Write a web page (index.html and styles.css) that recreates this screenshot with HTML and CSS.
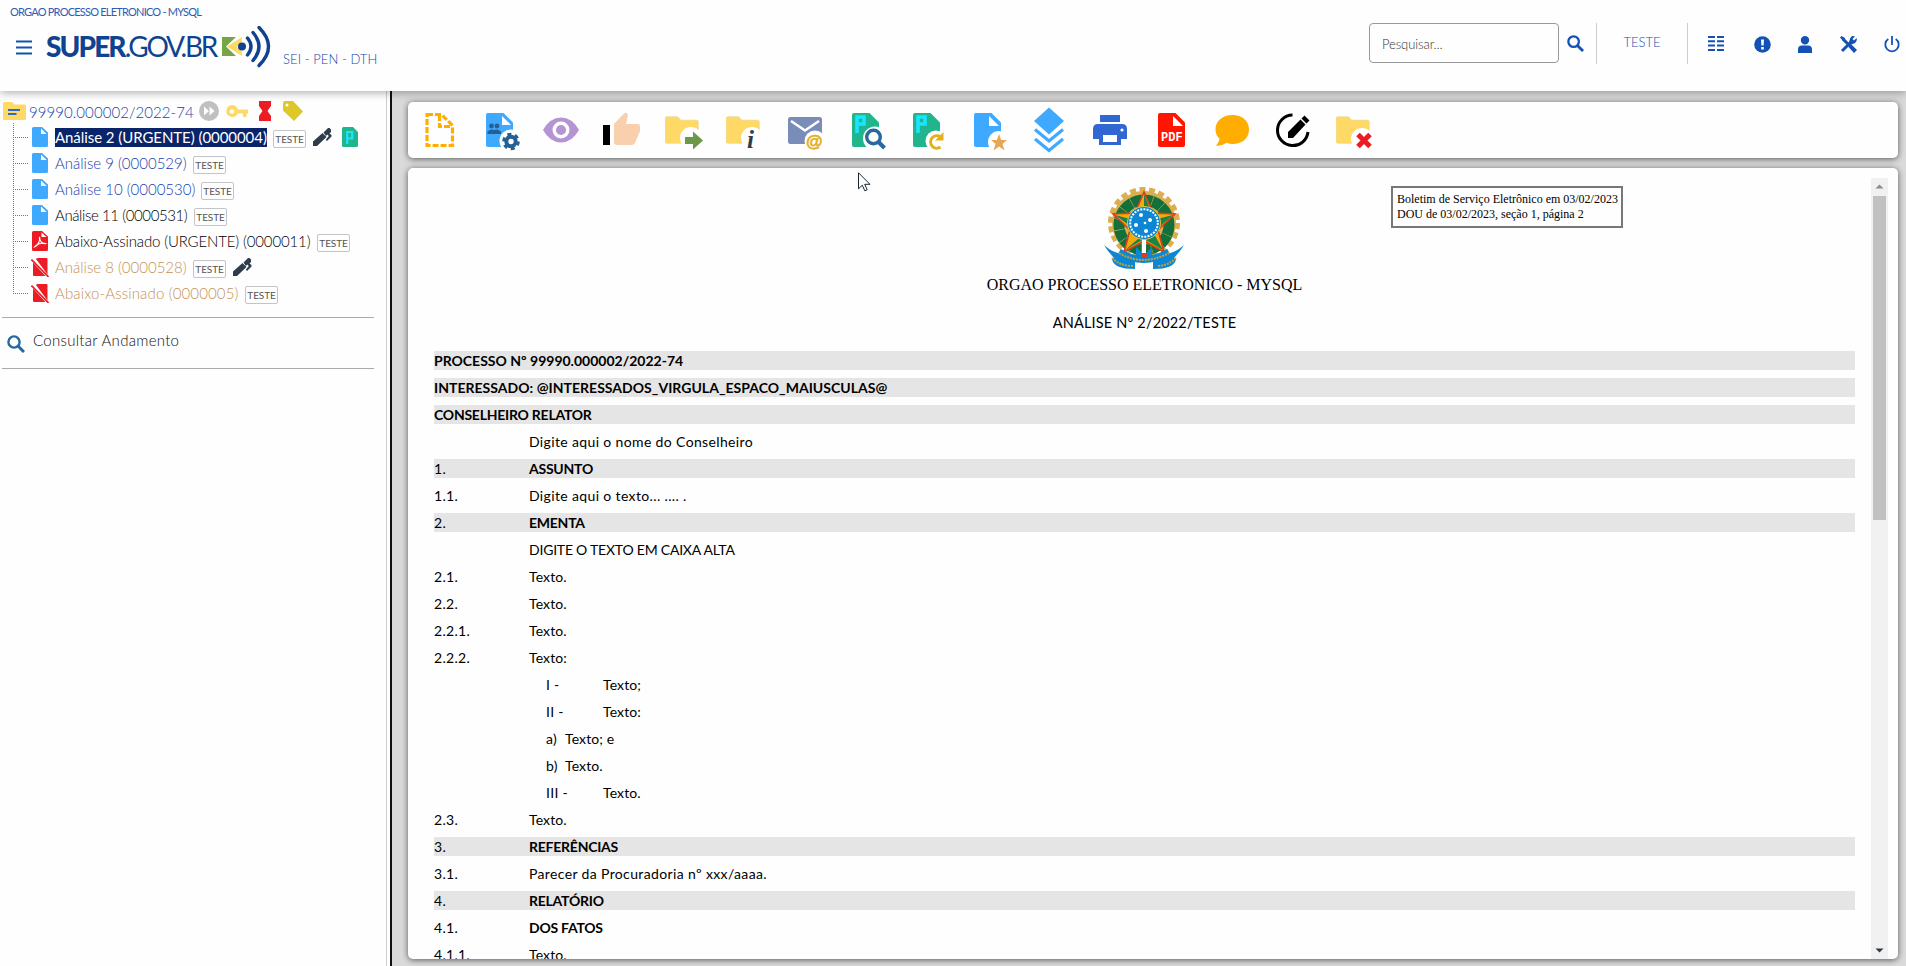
FILE: index.html
```html
<!DOCTYPE html>
<html lang="pt-BR">
<head>
<meta charset="utf-8">
<title>SUPER.GOV.BR - SEI</title>
<link rel="stylesheet" href="styles.css">
</head>
<body>
<svg width="0" height="0" class="defs">
  <defs>
    <symbol id="doc" viewBox="0 0 16 20"><path fill="#3fa9ff" d="M1.500 0H10l6 5.500V18.500a1.500 1.500 0 0 1-1.500 1.500h-13A1.500 1.500 0 0 1 0 18.500v-17A1.500 1.500 0 0 1 1.500 0z"/><path fill="#fff" d="M9 1.500V7h5.600z"/></symbol>
    <symbol id="cancelled" viewBox="0 0 18 20"><path fill="#ed1c24" d="M5 2Q5.500 1 7 1h8.500q1 0 1 1v15.500zM2 5.500L14.500 19H3q-1 0-1-1z"/><path stroke="#ed1c24" stroke-width="1.600" d="M.500 2.500l17 17.500"/></symbol>
    <symbol id="pen" viewBox="0 0 19 19"><path fill="#2f3c4c" d="M0 18v-4.500L9.500 5l4 4L4 18zM10.500 4.500L15 0h1.500L18 1.500V4l-1.500 1.500L18.500 7v1.500L14 13l-1.200-1.300L15.800 8l-1.500-1.500-1.300 1.400z"/></symbol>
    <symbol id="mag" viewBox="0 0 18 18"><circle cx="7" cy="7" r="5.600" fill="none" stroke="currentColor" stroke-width="2.400"/><path d="M11 11l6 6" stroke="currentColor" stroke-width="3"/></symbol>
    <symbol id="folder" viewBox="0 0 34 28"><path fill="#ffd966" stroke="#e0dccc" stroke-width=".5" d="M2 .5h10.500l3.500 3.500H31.500a2 2 0 0 1 2 2V25.500a2 2 0 0 1-2 2H2a2 2 0 0 1-2-2v-23a2 2 0 0 1 2-2z"/></symbol>
    <symbol id="bigdoc" viewBox="0 0 27 34"><path fill="currentColor" d="M2 0H17.500L27 9.500V32a2 2 0 0 1-2 2H2a2 2 0 0 1-2-2V2a2 2 0 0 1 2-2z"/></symbol>
    <symbol id="pmark" viewBox="0 0 12 18"><path fill="none" stroke="#19e5ff" stroke-width="3.600" d="M2 18V2H9V9H2"/></symbol>
  </defs>
</svg>

<header class="header">
  <div class="orgao">ORGAO PROCESSO ELETRONICO - MYSQL</div>
  <div class="brand">
    <svg class="menu" width="16" height="15" viewBox="0 0 16 15"><path stroke="#1351b4" stroke-width="1.800" d="M0 1.500h16M0 7.500h16M0 13.500h16"/></svg>
    <div class="logo"><b>SUPER</b><span>.GOV.BR</span></div>
    <svg class="waves" width="49" height="44" viewBox="0 0 49 44">
      <path fill="#77a546" d="M0 12h14L4 21.500 14 31H0z"/>
      <path fill="#ffd966" d="M20 12v5L15 21.500l5 5V31L5 21.500z"/>
      <circle cx="20" cy="21.500" r="4" fill="#10438f"/>
      <g fill="none" stroke="#10438f" stroke-width="3.400" stroke-linecap="round"><path d="M25.500 13Q32.500 21.500 25.500 30"/><path d="M31 7.500Q43 21.500 31 35.500"/><path d="M37 2.500Q56 21.500 37 40.500"/></g>
    </svg>
    <div class="sei">SEI - PEN - DTH</div>
  </div>
  <div class="tools">
    <div class="search">Pesquisar...</div>
    <svg class="t-mag" width="17" height="17"><use href="#mag"/></svg>
    <div class="unit">TESTE</div>
    <svg class="t-icon t1" width="16" height="15" viewBox="0 0 16 15"><path fill="#1351b4" d="M0 0h7v2H0zM9 0h7v2H9zM0 4.300h7v2H0zM9 4.300h7v2H9zM0 8.600h7v2H0zM9 8.600h7v2H9zM0 13h7v2H0zM9 13h7v2H9z"/></svg>
    <svg class="t-icon t2" width="17" height="17" viewBox="0 0 17 17"><circle cx="8.500" cy="8.500" r="8.300" fill="#1351b4"/><path fill="#fff" d="M7 3.500h3l-.4 6H7.400zM7.200 11h2.600v2.500H7.200z"/></svg>
    <svg class="t-icon t3" width="14" height="17" viewBox="0 0 14 17"><path fill="#1351b4" d="M7 0a4.200 4.200 0 1 1 0 8.400A4.200 4.200 0 0 1 7 0zM0 17v-3.500a4 4 0 0 1 4-4h6a4 4 0 0 1 4 4V17z"/></svg>
    <svg class="t-icon t4" width="17" height="17" viewBox="0 0 17 17"><path fill="none" stroke="#1351b4" stroke-width="3" d="M2 15l9-9M3 3l5 5"/><path fill="#1351b4" d="M0 1.500L1.500 0 5 2v2.500L3.500 5.500zM8.500 8l2-.5L17 14l-3 3-5.500-6zM12.500 0L15 .3 12.500 3l1.500 1.500L16.700 2A5 5 0 0 1 9.500 7.500C9 3 11 .500 12.500 0z"/></svg>
    <svg class="t-icon t5" width="16" height="17" viewBox="0 0 16 17"><path fill="none" stroke="#1351b4" stroke-width="1.800" d="M4.300 3a6.700 6.700 0 1 0 7.400 0M8 0v9"/></svg>
  </div>
</header>

<div class="main">
  <aside class="sidebar">
    <div class="process">
      <svg width="23" height="18" viewBox="0 0 23 18"><path fill="#ffd966" d="M1.500 0H9l2.500 2.500h10A1.500 1.500 0 0 1 23 4v12.500a1.500 1.500 0 0 1-1.500 1.500h-20A1.500 1.500 0 0 1 0 16.500v-15A1.500 1.500 0 0 1 1.500 0z"/><path stroke="#2a6fc0" stroke-width="2" d="M5 8h12M5 12h8.500"/></svg>
      <span class="number">99990.000002/2022-74</span>
      <svg width="20" height="20" viewBox="0 0 20 20"><circle cx="10" cy="10" r="10" fill="#c0c0c0"/><path fill="#fff" d="M5 5.500L10 10l-5 4.500zM10.500 5.500l5 4.500-5 4.500z"/></svg>
      <svg class="key" width="22" height="13" viewBox="0 0 22 13"><path fill="#ffd966" fill-rule="evenodd" d="M6 0a6 6 0 0 1 5.800 4.500H22v4h-1.500V12H17V8.500h-5.200A6 6 0 1 1 6 0zm0 4.200a2.300 2.300 0 1 0 0 4.600 2.300 2.300 0 0 0 0-4.600z"/></svg>
      <svg class="glass" width="12" height="20" viewBox="0 0 12 20"><path fill="#ed1c24" d="M0 0h12v5L8.500 10l3.500 5v5H0v-5l3.500-5L0 5z"/></svg>
      <svg class="tag" width="20" height="20" viewBox="0 0 20 20"><path fill="#dfc728" d="M1.500 0H10L20 10.500 11 20 0 9.500V1.500z"/><circle cx="4" cy="4" r="1.500" fill="#fff"/></svg>
    </div>
    <ul class="tree">
      <li><svg width="16" height="20"><use href="#doc"/></svg><span class="name selected f1">Análise 2 (URGENTE) (0000004)</span><em>TESTE</em><svg class="p" width="19" height="19"><use href="#pen"/></svg><svg class="pp" width="16" height="20" viewBox="0 0 16 20"><path fill="#20b58c" d="M1.500 0H11l5 5V18.500a1.500 1.500 0 0 1-1.500 1.500h-13A1.500 1.500 0 0 1 0 18.500v-17A1.500 1.500 0 0 1 1.500 0z"/><path fill="none" stroke="#19e5ff" stroke-width="2.200" d="M5.200 17V5h5v6.500h-5"/></svg></li>
      <li><svg width="16" height="20"><use href="#doc"/></svg><span class="name blue f2">Análise 9 (0000529)</span><em>TESTE</em></li>
      <li><svg width="16" height="20"><use href="#doc"/></svg><span class="name blue f3">Análise 10 (0000530)</span><em>TESTE</em></li>
      <li><svg width="16" height="20"><use href="#doc"/></svg><span class="name f4">Análise 11 (0000531)</span><em>TESTE</em></li>
      <li><svg width="16" height="20" viewBox="0 0 16 20"><path fill="#ed1c24" d="M1.500 0H10l6 5.500V18.500a1.500 1.500 0 0 1-1.500 1.500h-13A1.500 1.500 0 0 1 0 18.500v-17A1.500 1.500 0 0 1 1.500 0z"/><path fill="#fff" d="M9.500 1.500V6h5z"/><path fill="none" stroke="#fff" stroke-width="1.200" d="M7.500 6c1 4-2 9-5 10 2-3 7-4.500 11-3.500-3 1-6-2.500-6-6.500z"/></svg><span class="name f5">Abaixo-Assinado (URGENTE) (0000011)</span><em>TESTE</em></li>
      <li><svg class="x" width="18" height="20"><use href="#cancelled"/></svg><span class="name tan f6">Análise 8 (0000528)</span><em>TESTE</em><svg class="p" width="19" height="19"><use href="#pen"/></svg></li>
      <li><svg class="x" width="18" height="20"><use href="#cancelled"/></svg><span class="name tan f7">Abaixo-Assinado (0000005)</span><em>TESTE</em></li>
    </ul>
    <div class="consult"><svg width="18" height="18"><use href="#mag"/></svg><span>Consultar Andamento</span></div>
  </aside>
  <div class="splitter"></div>

  <main class="content">
    <nav class="toolbar">
      <svg viewBox="0 0 40 40"><path fill="none" stroke="#ffae00" stroke-width="3.200" stroke-dasharray="6 2" d="M8 4.500H22.500L33.500 15.500V35.500H8zM20.500 5V16.500H33"/></svg>
      <svg viewBox="0 0 40 40"><use href="#bigdoc" color="#3fa9ff" x="6" y="3" width="27" height="34"/><path fill="#fff" d="M22 6v9h9z"/><g fill="#265f94"><circle cx="11.500" cy="16" r="2.400"/><circle cx="17" cy="16" r="2.400"/><path d="M7.500 24v-2.500Q11 18.500 14 20q3.500-1.500 7 1.500V24z"/></g><circle cx="31" cy="31" r="11.500" fill="#fff"/><circle cx="31" cy="31.500" r="4.700" fill="none" stroke="#265f94" stroke-width="4"/><circle cx="31" cy="31.500" r="7.300" fill="none" stroke="#265f94" stroke-width="3" stroke-dasharray="4 3.640"/></svg>
      <svg viewBox="0 0 40 40"><path fill="#b494d2" d="M2 20Q9 7.500 20 7.500T38 20Q31 32.500 20 32.500T2 20z"/><circle cx="20" cy="20" r="8.500" fill="#fff"/><circle cx="20" cy="20" r="5" fill="#b494d2"/></svg>
      <svg viewBox="0 0 40 40"><path d="M1 15h7v20H1z"/><path fill="#f9d0ae" d="M15 35a3 3 0 0 1-3-3V14L22 3.500Q24.500 1.500 26 5l-2 9H36Q38 14 38 17v4l-5 12q-1 2-3 2z"/></svg>
      <svg viewBox="0 0 40 40"><use href="#folder" x="2" y="6" width="34" height="28"/><circle cx="28" cy="28" r="11" fill="#fff"/><path fill="#6a9a48" d="M22 27h8v-5.500l10 9-10 9V34h-8z"/></svg>
      <svg viewBox="0 0 40 40"><use href="#folder" x="2" y="6" width="34" height="28"/><circle cx="28" cy="28" r="11" fill="#fff"/><text x="23" y="38" class="info">i</text></svg>
      <svg viewBox="0 0 40 40"><rect x="3" y="7" width="34" height="27" rx="2.500" fill="#7a8cb8"/><path fill="none" stroke="#fff" stroke-width="2.600" d="M6 11l14 9.500L34 11"/><circle cx="30" cy="31" r="10.500" fill="#fff"/><text x="21" y="37" class="at">@</text></svg>
      <svg viewBox="0 0 40 40"><use href="#bigdoc" color="#20b58c" x="6" y="3" width="27" height="34"/><use href="#pmark" x="9" y="5" width="12" height="18"/><circle cx="29" cy="28.500" r="12" fill="#fff"/><circle cx="27.500" cy="27" r="6.800" fill="none" stroke="#2768a0" stroke-width="3.400"/><path stroke="#2768a0" stroke-width="4" d="M32 31.500l6.500 6.500"/></svg>
      <svg viewBox="0 0 40 40"><use href="#bigdoc" color="#20b58c" x="6" y="3" width="27" height="34"/><use href="#pmark" x="9" y="5" width="12" height="18"/><circle cx="29" cy="31" r="10.500" fill="#fff"/><path fill="none" stroke="#e3b11c" stroke-width="3" d="M33.500 37a6.200 6.200 0 1 1 0-10"/><path fill="#e3b11c" d="M36.500 22v8.500H28z"/></svg>
      <svg viewBox="0 0 40 40"><use href="#bigdoc" color="#3fa9ff" x="6" y="3" width="27" height="34"/><path fill="#fff" d="M21 6v10h10z"/><circle cx="31" cy="32" r="11" fill="#fff"/><path fill="#e6a756" d="M31 24l2.200 6H39l-4.500 4 2 6.500-5.500-4-5.500 4 2-6.500-4.500-4h5.800z"/></svg>
      <svg viewBox="0 0 40 40"><path fill="#3fa9ff" d="M20-2.500L35 11 20 24.500 5 11z"/><path fill="none" stroke="#3fa9ff" stroke-width="3.200" d="M6 19.500L20 31l14-11.500M6 29L20 40.500 34 29"/></svg>
      <svg viewBox="0 0 40 40"><path fill="#3167d3" d="M10 5h20v7H10zM8 14h24q5 0 5 5v10h-6v6H9v-6H3V19q0-5 5-5z"/><path fill="#fff" d="M13 25h14v10H13z"/><circle cx="32" cy="20" r="1.600" fill="#fff"/><path fill="none" stroke="#3167d3" stroke-width="3" d="M11.500 25v8.500h17V25"/></svg>
      <svg viewBox="0 0 40 40"><use href="#bigdoc" color="#ff1500" x="7" y="3" width="27" height="34"/><path fill="#fff" d="M22 6v10h10z"/><text x="10" y="31" class="pdf">PDF</text></svg>
      <svg viewBox="0 0 40 40"><path fill="#ffae00" d="M20.500 5C30 5 37 10.500 37 19.500S30 34 20.500 34q-3 0-6-1.300Q9 36.500 4 35.500q3.500-4 3.500-7Q3.500 25 3.500 19.500C3.500 10.500 11 5 20.500 5z"/></svg>
      <svg viewBox="0 0 40 40"><path fill="none" stroke="#000" stroke-width="3" d="M19.500 5a15.300 15.300 0 1 0 15.500 17"/><path d="M15 28v-6L27.500 9.500l5 5L20 28zM28.500 8.500l3-3 5 5-3 3z"/></svg>
      <svg viewBox="0 0 40 40"><use href="#folder" x="2" y="6" width="34" height="28"/><circle cx="28" cy="29" r="11" fill="#fff"/><path stroke="#ed1c24" stroke-width="5" d="M24 24.500l12 12M36 24.500L24 36.500"/></svg>
    </nav>

    <section class="paper">
      <div class="document">
        <div class="stamp">Boletim de Serviço Eletrônico em 03/02/2023<br>DOU de 03/02/2023, seção 1, página 2</div>
        <svg class="arms" width="82" height="84" viewBox="0 0 82 84">
          <circle cx="41" cy="36" r="32" fill="#dcae4f"/>
          <circle cx="41" cy="36" r="33.500" fill="none" stroke="#dcae4f" stroke-width="5" stroke-dasharray="6 3.570"/>
          <circle cx="41" cy="38" r="25" fill="none" stroke="#14703a" stroke-width="11" stroke-dasharray="10 .470"/>
          <path fill="#f6a90b" stroke="#dc3c1c" stroke-width="1.600" d="M41 5l9 21 22 1-17 16 6 22-20-11-20 11 6-22L10 27l22-1z"/>
          <path fill="#198544" d="M41 7v20h8zM70 28L54 32v10zM60 63L51 47l-10 5zM22 63l19-11V47zM12 28l18 13 1-8z"/>
          <path fill="#fff" d="M39 52h4v14h-4z"/>
          <path fill="#0d86d3" d="M1 58q9 8 18 9l13 6v9Q10 82 9 72l2-1-6-7zM81 58q-9 8-18 9l-13 6v9q22 0 23-10l-2-1 6-7zM33 60l8 8 8-8v11H33z"/>
          <path fill="none" stroke="#0d86d3" stroke-width="7" d="M16 65q24 15 50 0"/>
          <path fill="none" stroke="#b5a642" stroke-width="2" stroke-dasharray="2 1" d="M16 66q24 14 50 0M9 71q8 8 21 8M73 71q-8 8-19 8"/>
          <path fill="#dc3c1c" d="M38 66h6v5h-6z"/>
          <circle cx="41" cy="36" r="16.500" fill="#0d86d3" stroke="#d8c63c"/>
          <circle cx="41" cy="36" r="13.800" fill="none" stroke="#fff" stroke-width="2" stroke-dasharray="2 1.200"/>
          <g fill="#fff"><circle cx="38" cy="28" r="2"/><circle cx="47" cy="33" r="2"/><circle cx="33" cy="38" r="2"/><circle cx="43" cy="44" r="2"/><circle cx="42" cy="36" r="1.300"/></g>
        </svg>
        <h1>ORGAO PROCESSO ELETRONICO - MYSQL</h1>
        <h2>ANÁLISE Nº 2/2022/TESTE</h2>
        <div class="row bar"><b class="w1">PROCESSO Nº 99990.000002/2022-74</b></div>
        <div class="row bar"><b class="w2">INTERESSADO: @INTERESSADOS_VIRGULA_ESPACO_MAIUSCULAS@</b></div>
        <div class="row bar"><b>CONSELHEIRO RELATOR</b></div>
        <div class="row"><i></i><span class="long">Digite aqui o nome do Conselheiro</span></div>
        <div class="row bar"><i>1.</i><b>ASSUNTO</b></div>
        <div class="row"><i>1.1.</i><span class="long">Digite aqui o texto... .... .</span></div>
        <div class="row bar"><i>2.</i><b>EMENTA</b></div>
        <div class="row"><i></i><span class="caps">DIGITE O TEXTO EM CAIXA ALTA</span></div>
        <div class="row"><i>2.1.</i><span>Texto.</span></div>
        <div class="row"><i>2.2.</i><span>Texto.</span></div>
        <div class="row"><i>2.2.1.</i><span>Texto.</span></div>
        <div class="row"><i>2.2.2.</i><span>Texto:</span></div>
        <div class="row roman"><i>I -</i><span>Texto;</span></div>
        <div class="row roman"><i>II -</i><span>Texto:</span></div>
        <div class="row letter"><i>a)</i><span>Texto; e</span></div>
        <div class="row letter"><i>b)</i><span>Texto.</span></div>
        <div class="row roman"><i>III -</i><span>Texto.</span></div>
        <div class="row"><i>2.3.</i><span>Texto.</span></div>
        <div class="row bar"><i>3.</i><b>REFERÊNCIAS</b></div>
        <div class="row"><i>3.1.</i><span class="long">Parecer da Procuradoria nº xxx/aaaa.</span></div>
        <div class="row bar"><i>4.</i><b>RELATÓRIO</b></div>
        <div class="row"><i>4.1.</i><b>DOS FATOS</b></div>
        <div class="row"><i>4.1.1.</i><span>Texto.</span></div>
      </div>
      <div class="scroll">
        <svg width="17" height="17" viewBox="0 0 17 17"><path fill="#8c8c8c" d="M8.500 6.500l4 4h-8z"/></svg>
        <div class="thumb"></div>
        <svg class="down" width="17" height="17" viewBox="0 0 17 17"><path fill="#2f3c4c" d="M8.500 10.500l4-4h-8z"/></svg>
      </div>
    </section>
  </main>
</div>
<svg class="cursor" width="13" height="20" viewBox="0 0 13 20"><path fill="#fff" stroke="#1c2430" d="M.500.800v16l3.800-3.600 2.500 5.600 2.400-1-2.500-5.500h5.300z"/></svg>
</body>
</html>
```
FILE: styles.css
```css
* { box-sizing: border-box; }
body { margin: 0; width: 1906px; height: 966px; overflow: hidden; background: #fefefe; font-family: Lato, "Open Sans", sans-serif; display: flex; flex-direction: column; }
svg { display: block; flex: none; overflow: visible; }
.defs { position: absolute; }

.header { height: 91px; flex: none; display: grid; grid-template-columns: 1fr auto; grid-template-rows: 23px 68px; background: #fefefe; box-shadow: 0 2px 8px rgba(0,0,0,.3); position: relative; z-index: 2; color: #2f5cb5; }
.orgao { grid-column: 1; padding: 5px 0 0 10px; font-size: 11px; line-height: 14px; letter-spacing: -.78px; white-space: nowrap; }
.brand { grid-column: 1; grid-row: 2; display: flex; align-items: flex-start; padding-left: 16px; }
.menu { margin-top: 17px; }
.logo { margin: 5px 0 0 14px; width: 168px; font-size: 28px; line-height: 36px; color: #10438f; white-space: nowrap; letter-spacing: -2.300px; }
.logo b { font-weight: 900; letter-spacing: -1.900px; }
.waves { margin: 2px 0 0 8px; }
.sei { margin: 28px 0 0 12px; font-size: 13px; line-height: 17px; font-weight: 300; white-space: nowrap; color: #1a44a8; letter-spacing: .08px; }
.tools { grid-column: 2; grid-row: 1 / 3; display: flex; align-items: flex-start; padding-top: 23px; width: 537px; color: #1351b4; }
.search { width: 190px; height: 40px; border: 1px solid #999; border-radius: 4px; padding: 0 12px; line-height: 40px; font-size: 13px; font-weight: 300; color: #333; letter-spacing: -.1px; }
.t-mag { margin: 12px 0 0 8px; }
.unit { width: 92px; height: 41px; margin-left: 12px; border: solid #ccc; border-width: 0 1px; text-align: center; font-size: 13px; line-height: 38px; font-weight: 300; }
.t-icon { margin-top: 13px; }
.t1 { margin-left: 20px; }
.t2 { margin-left: 30px; }
.t3 { margin-left: 27px; }
.t4 { margin-left: 28px; }
.t5 { margin-left: 27px; }

.main { flex: 1; display: flex; min-height: 0; }
.sidebar { width: 386px; background: #fefefe; }
.splitter { width: 6px; border-left: 1px solid #ccc; border-right: 2px solid #111; background: #fefefe; }
.process { padding: 8px 0 0 3px; display: flex; align-items: center; height: 32px; }
.number { width: 163px; margin: 0 7px 0 3px; padding-top: 1px; font-size: 15px; font-weight: 300; color: #1a44a8; letter-spacing: .06px; white-space: nowrap; }
.key { margin-left: 7px; }
.glass { margin-left: 11px; }
.tag { margin-left: 12px; }
.tree { list-style: none; margin: 0 0 0 13px; padding: 0; position: relative; }
.tree::before { content: ""; position: absolute; left: 0; top: 0; height: 169px; border-left: 1px dotted #777; }
.tree li { height: 26px; display: flex; align-items: center; position: relative; padding-top: 2px; }
.tree li::before { content: ""; width: 15px; margin-right: 4px; border-top: 1px dotted #777; }
.tree li > .x { margin: 0 -1px; }
.name { margin-left: 7px; font-size: 15px; line-height: 19px; font-weight: 300; white-space: nowrap; color: #000; }
.selected { background: #0a246a; color: #fff; font-weight: 400; letter-spacing: -.06px; }
.blue { color: #1a3fb0; }
.tan { color: #c4935a; }
.tree em { margin: 3px 0 0 6px; width: 33px; height: 18px; border: 1px solid #c4c4c4; border-radius: 2px; font-style: normal; font-size: 10px; line-height: 17px; text-align: center; color: #555; letter-spacing: -.1px; }
.tree .p { margin-left: 7px; }
.tree .pp { margin-left: 10px; }
.f1 { width: 212px; }
.f2 { width: 132px; }
.f3 { width: 140px; }
.f4 { width: 133px; letter-spacing: -.4px; }
.f5 { width: 256px; letter-spacing: -.14px; }
.f6 { width: 132px; }
.f7 { width: 184px; letter-spacing: .14px; }
.consult { margin: 12px 0 0 2px; width: 372px; height: 52px; border: solid #aaa; border-width: 1px 0; display: flex; padding: 17px 0 0 5px; gap: 8px; color: #2768a0; }
.consult span { margin-top: -4px; color: #111; font-size: 15px; line-height: 18px; font-weight: 300; letter-spacing: .3px; }

.content { flex: 1; background: #dadada; padding: 11px 8px 7px 16px; display: flex; flex-direction: column; gap: 10px; min-width: 0; }
.toolbar, .paper { background: #fefefe; border-radius: 5px; box-shadow: 0 1px 6px rgba(0,0,0,.6); }
.toolbar { height: 56px; flex: none; display: flex; gap: 21px; padding: 8px 0 0 11px; }
.toolbar svg { width: 40px; height: 40px; }
.info { font: italic bold 25px "Liberation Serif", serif; fill: #2f3c4c; }
.at { font: bold 17px "Liberation Sans", sans-serif; fill: #e3b11c; stroke: #e3b11c; stroke-width: .6px; }
.pdf { font: bold 12px "Liberation Mono", monospace; fill: #fff; }
.paper { flex: 1; min-height: 0; display: flex; padding: 10px 10px 0 26px; overflow: hidden; }
.document { width: 1421px; position: relative; color: #000; font-size: 14px; }
.stamp { position: absolute; left: 957px; top: 8px; width: 232px; height: 42px; border: 2px solid #777; padding: 4px; font: 12px/15px "Liberation Serif", serif; white-space: nowrap; }
.arms { margin: 9px auto 0; position: relative; left: -1px; }
h1 { margin: 2px 0 0; font: 16px/24px "Liberation Serif", serif; text-align: center; }
h2 { margin: 16px 0 19px; font-size: 14.500px; line-height: 19px; font-weight: 400; text-align: center; letter-spacing: .16px; }
.row { height: 19px; margin-bottom: 8px; line-height: 19px; display: flex; white-space: nowrap; }
.row i { font-style: normal; width: 95px; letter-spacing: .3px; }
.row b { letter-spacing: -.24px; }
.row .w1 { letter-spacing: 0; }
.row .w2 { letter-spacing: .03px; }
.row span { letter-spacing: .12px; }
.row .long { letter-spacing: .36px; }
.row .caps { letter-spacing: -.22px; }
.bar { background: #e5e5e5; }
.roman i { margin-left: 112px; width: 57px; }
.letter i { margin-left: 112px; width: 19px; }
.scroll { width: 17px; margin-left: auto; background: #f1f1f1; display: flex; flex-direction: column; }
.thumb { width: 13px; height: 324px; margin: 1px 2px 0; background: #c1c1c1; }
.down { margin-top: auto; }
.cursor { position: absolute; left: 858px; top: 172px; }
```
